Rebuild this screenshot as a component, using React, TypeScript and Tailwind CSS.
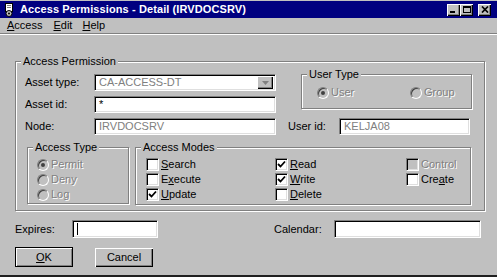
import React from "react";

const raised =
  "bg-[#c0c0c0] shadow-[inset_1px_1px_0_#fff,inset_-1px_-1px_0_#000,inset_-2px_-2px_0_#808080]";
const sunken =
  "border border-t-[#808080] border-l-[#808080] border-b-white border-r-white shadow-[inset_1px_1px_0_#000,inset_-1px_-1px_0_#dfdfdf]";
const dim = "text-[#808080] [text-shadow:1px_1px_0_#fff]";

function Group({
  title,
  className = "",
  inner = "",
  children,
}: {
  title: string;
  className?: string;
  inner?: string;
  children: React.ReactNode;
}) {
  return (
    <fieldset
      className={`border border-[#808080] shadow-[inset_1px_1px_0_#fff,1px_1px_0_#fff] ${className}`}
    >
      <legend className="ml-[5px] bg-[#c0c0c0] px-[2px] leading-[13px]">{title}</legend>
      <div className={inner}>{children}</div>
    </fieldset>
  );
}

function Field({
  className = "",
  value,
  muted,
  caret,
  children,
}: {
  className?: string;
  value?: string;
  muted?: boolean;
  caret?: boolean;
  children?: React.ReactNode;
}) {
  return (
    <div className={`flex items-center bg-white pl-[4px] ${sunken} ${className}`}>
      {caret && <span className="h-[12px] w-px bg-black" />}
      <span className={`flex-1 leading-[13px] ${muted ? "text-[#808080]" : "text-black"}`}>
        {value}
      </span>
      {children}
    </div>
  );
}

function Radio({ label, checked }: { label: React.ReactNode; checked?: boolean }) {
  return (
    <div className="flex h-[13px] items-center gap-[2px]">
      <span className="flex h-[12px] w-[12px] items-center justify-center rounded-full border border-t-[#808080] border-l-[#808080] border-b-white border-r-white bg-[#c0c0c0] shadow-[inset_1px_1px_0_#404040]">
        {checked && <span className="h-[4px] w-[4px] rounded-full bg-[#404040]" />}
      </span>
      <span className={`leading-[13px] ${dim}`}>{label}</span>
    </div>
  );
}

function Check({
  label,
  checked,
  disabled,
}: {
  label: React.ReactNode;
  checked?: boolean;
  disabled?: boolean;
}) {
  return (
    <div className="flex h-[13px] items-center gap-[2px]">
      <span
        className={`flex h-[13px] w-[13px] items-center justify-center ${sunken} ${
          disabled ? "bg-[#c0c0c0]" : "bg-white"
        }`}
      >
        {checked && (
          <svg width="9" height="9" viewBox="0 0 9 9">
            <polyline points="1,4 3.5,6.5 8,1.5" fill="none" stroke="#000" strokeWidth="1.8" />
          </svg>
        )}
      </span>
      <span className={`leading-[13px] ${disabled ? dim : "text-black"}`}>{label}</span>
    </div>
  );
}

function CapBtn({ className = "", children }: { className?: string; children: React.ReactNode }) {
  return (
    <span className={`flex h-[12px] w-[13px] items-center justify-center ${raised} ${className}`}>
      {children}
    </span>
  );
}

export default function App() {
  return (
    <div className="flex h-[277px] w-[497px] flex-col overflow-hidden bg-[#c0c0c0] font-['Liberation_Sans',Arial,sans-serif] text-[11px] text-black">
      {/* Title bar */}
      <div className="h-px" />
      <div className="flex h-[17px] items-center bg-[#000080] pl-[4px] pr-[6px]">
        <svg width="11" height="14" viewBox="0 0 11 14">
          <rect x="1.5" y="0.5" width="7" height="8" fill="#fff" stroke="#000" />
          <rect x="3" y="2" width="4" height="1" fill="#808080" />
          <rect x="3" y="4" width="4" height="1" fill="#808080" />
          <circle cx="5" cy="10.5" r="3" fill="#c0c0c0" stroke="#000" />
          <circle cx="5" cy="10.5" r="1" fill="#000" />
        </svg>
        <span className="ml-[5px] text-[11px] font-bold leading-[13px] tracking-[0.1px] text-white">
          Access Permissions - Detail (IRVDOCSRV)
        </span>
        <div className="ml-auto flex items-center">
          <CapBtn>
            <span className="mt-[5px] mr-[3px] h-[2px] w-[5px] bg-black" />
          </CapBtn>
          <CapBtn>
            <span className="h-[7px] w-[8px] border border-t-2 border-black" />
          </CapBtn>
          <CapBtn className="ml-[5px]">
            <svg width="8" height="7" viewBox="0 0 8 7">
              <path d="M1 0.5 L7 6.5 M7 0.5 L1 6.5" stroke="#000" strokeWidth="1.7" />
            </svg>
          </CapBtn>
        </div>
      </div>

      {/* Menu bar */}
      <div className="flex h-[15px] items-center pl-[7px] leading-[13px]">
        <span>
          <u>A</u>ccess
        </span>
        <span className="ml-[11px]">
          <u>E</u>dit
        </span>
        <span className="ml-[10px]">
          <u>H</u>elp
        </span>
      </div>
      <div className="h-px bg-[#808080]" />
      <div className="h-px bg-white" />

      {/* Body */}
      <div className="flex flex-col px-[15px]">
        <Group title="Access Permission" className="mt-[20px] w-[470px]" inner="pb-[5px] pl-[9px]">
          <div className="flex items-start">
            <div className="flex flex-col gap-[5px] pt-[6px]">
              <div className="flex items-center">
                <span className="w-[69px]">Asset type:</span>
                <Field className="h-[17px] w-[182px] pr-[2px]" value="CA-ACCESS-DT" muted>
                  <span className={`flex h-[13px] w-[16px] items-center justify-center ${raised}`}>
                    <svg width="7" height="4" viewBox="0 0 7 4">
                      <path d="M0 0 H7 L3.5 4 Z" fill="#808080" />
                    </svg>
                  </span>
                </Field>
              </div>
              <div className="flex items-center">
                <span className="w-[69px]">Asset id:</span>
                <Field className="h-[17px] w-[182px]" value="*" />
              </div>
            </div>
            <Group title="User Type" className="ml-[25px] w-[171px]" inner="pt-[5px] pb-[9px] pl-[15px]">
              <div className="flex">
                <div className="w-[93px]">
                  <Radio label="User" checked />
                </div>
                <Radio label="Group" />
              </div>
            </Group>
          </div>

          <div className="mt-[5px] flex items-center">
            <span className="w-[69px]">Node:</span>
            <Field className="h-[17px] w-[182px]" value="IRVDOCSRV" muted />
            <span className="ml-[12px] w-[51px]">User id:</span>
            <Field className="h-[17px] w-[131px]" value="KELJA08" muted />
          </div>

          <div className="mt-[6px] flex items-start">
            <Group title="Access Type" className="ml-[2px] w-[102px]" inner="pt-[4px] pb-[2px] pl-[9px]">
              <div className="flex flex-col gap-[2px]">
                <Radio label="Permit" checked />
                <Radio label="Deny" />
                <Radio label="Log" />
              </div>
            </Group>
            <Group title="Access Modes" className="ml-[6px] w-[336px]" inner="pt-[4px] pb-[3px] pl-[10px]">
              <div className="flex">
                <div className="flex w-[129px] flex-col gap-[2px]">
                  <Check label={<><u>S</u>earch</>} />
                  <Check label={<>E<u>x</u>ecute</>} />
                  <Check label={<><u>U</u>pdate</>} checked />
                </div>
                <div className="flex w-[131px] flex-col gap-[2px]">
                  <Check label={<><u>R</u>ead</>} checked />
                  <Check label={<><u>W</u>rite</>} checked />
                  <Check label={<><u>D</u>elete</>} />
                </div>
                <div className="flex flex-col gap-[2px]">
                  <Check label="Control" disabled />
                  <Check label={<>Cre<u>a</u>te</>} />
                </div>
              </div>
            </Group>
          </div>
        </Group>

        <div className="mt-[9px] flex items-center">
          <span className="w-[57px]">Expires:</span>
          <Field className="h-[18px] w-[86px]" caret />
          <span className="ml-[116px] w-[60px]">Calendar:</span>
          <Field className="h-[18px] w-[147px]" />
        </div>

        <div className="mt-[9px] flex items-center">
          <button className="flex h-[20px] w-[58px] items-center justify-center border border-black bg-[#c0c0c0] shadow-[inset_1px_1px_0_#fff,inset_-1px_-1px_0_#808080] leading-[13px]">
            <span>
              <u>O</u>K
            </span>
          </button>
          <button className={`ml-[22px] flex h-[19px] w-[58px] items-center justify-center leading-[13px] ${raised}`}>
            Cancel
          </button>
        </div>
      </div>

      <div className="mt-auto h-[2px] bg-[#202020]" />
    </div>
  );
}
